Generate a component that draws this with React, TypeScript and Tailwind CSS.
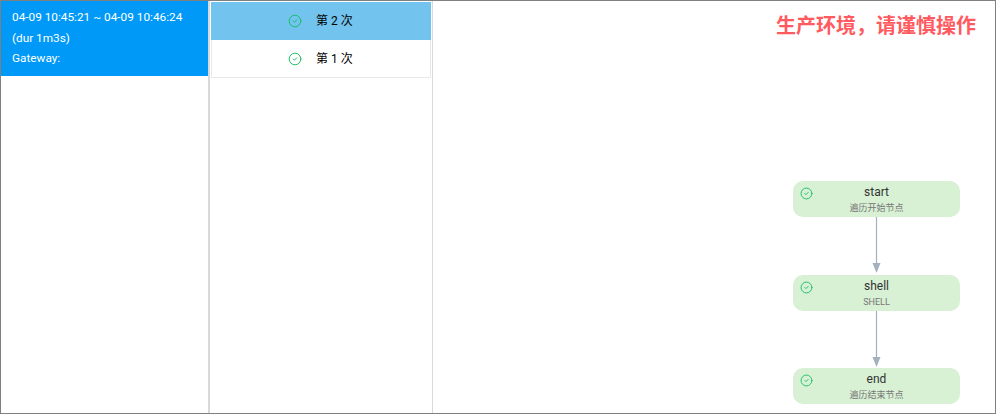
import { CircleCheck } from "lucide-react";

const font = "font-['Roboto','Noto_Sans_CJK_SC',sans-serif]";

const attempts = [
	{ label: "第 2 次", active: true },
	{ label: "第 1 次", active: false },
];

const nodes = [
	{ name: "start", desc: "遍历开始节点" },
	{ name: "shell", desc: "SHELL" },
	{ name: "end", desc: "遍历结束节点" },
];

function Arrow() {
	return (
		<svg width="12" height="57.5" viewBox="0 0 12 57.5" className="block">
			<line x1="5.5" y1="0" x2="5.5" y2="48" stroke="#a3b1bf" strokeWidth="1.2" />
			<path d="M1.5 46 L9.5 46 L5.5 56 Z" fill="#a3b1bf" />
		</svg>
	);
}

function FlowNode({ name, desc }: { name: string; desc: string }) {
	return (
		<div className="relative flex h-[36px] w-[167px] flex-col items-center rounded-[10px] bg-[#d8f0d4] pt-[3px]">
			<CircleCheck
				size={13}
				strokeWidth={1.7}
				className="absolute left-[7px] top-[6px] text-[#12c060]"
			/>
			<div className="text-[12px] leading-[16px] text-[#333]">{name}</div>
			<div className="mt-[2px] text-[9px] leading-[13px] text-[#777]">{desc}</div>
		</div>
	);
}

export default function App() {
	return (
		<div
			className={`flex h-[414px] w-[996px] overflow-hidden border border-[#808080] bg-white ${font}`}
		>
			<div className="w-[207px] shrink-0">
				<div className="h-[75px] bg-[#0099f8] pl-[11px] pt-[6px] text-[11.8px] leading-[20.5px] text-white">
					<div>04-09 10:45:21 ~ 04-09 10:46:24</div>
					<div>(dur 1m3s)</div>
					<div>Gateway:</div>
				</div>
			</div>
			<div className="w-[225px] shrink-0 border-x-2 border-x-[#d9d9d9] border-r-[1px] pl-px pr-px pt-px">
				{attempts.map((a) => (
					<div
						key={a.label}
						className={`flex h-[38px] items-center justify-center gap-[14px] border-[#e8e8e8] ${
							a.active ? "bg-[#72c3ed]" : "border border-t-0 bg-white"
						}`}
					>
						<CircleCheck size={14} strokeWidth={1.6} className="text-[#12c060]" />
						<span className="w-[38px] whitespace-nowrap text-[12px] leading-none text-black">
							{a.label}
						</span>
					</div>
				))}
			</div>
			<div className="flex min-w-0 flex-1 flex-col items-end">
				<div className="mr-[19px] mt-[11px] text-[20px] font-bold leading-[28px] text-[#ff5a5f]">
					生产环境，请谨慎操作
				</div>
				<div className="mr-[35px] mt-[141px] flex flex-col items-center">
					{nodes.map((n, i) => (
						<div key={n.name} className="flex flex-col items-center">
							{i > 0 && <Arrow />}
							<FlowNode name={n.name} desc={n.desc} />
						</div>
					))}
				</div>
			</div>
		</div>
	);
}
